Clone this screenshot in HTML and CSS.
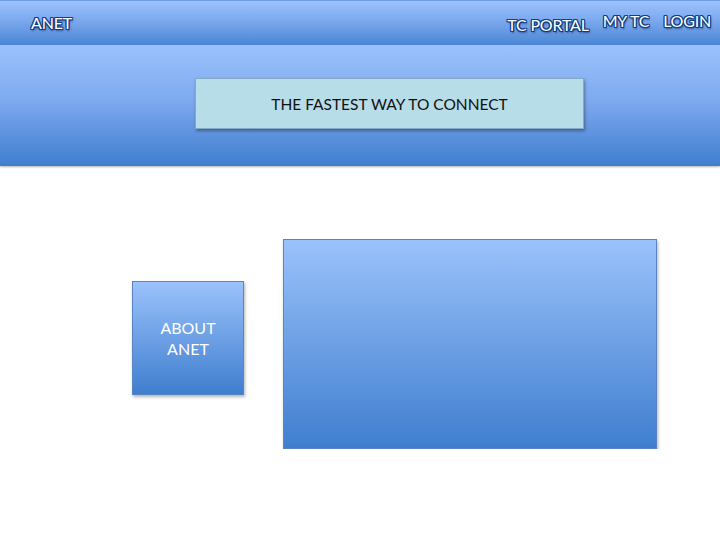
FILE: index.html
```html
<!DOCTYPE html>
<html>
<head>
<meta charset="utf-8">
<link rel="stylesheet" href="styles.css">
</head>
<body>
<header class="topbar">
  <span class="brand">ANET</span>
  <nav class="links">
    <span class="link">TC PORTAL</span>
    <span class="link">MY TC</span>
    <span class="link">LOGIN</span>
  </nav>
</header>
<section class="banner">
  <div class="tagline">THE FASTEST WAY TO CONNECT</div>
</section>
<main class="content">
  <div class="about">ABOUT<br>ANET</div>
  <div class="panel"></div>
</main>
</body>
</html>
```
FILE: styles.css
```css
html, body {
  margin: 0;
  padding: 0;
  background: #ffffff;
  font-family: Lato, "Open Sans", "Liberation Sans", sans-serif;
}
.topbar {
  height: 45px;
  box-sizing: border-box;
  border-top: 1px solid #6f9be0;
  background: linear-gradient(#9cc2fb, #7fabf0 40%, #4a86d4 100%);
  display: flex;
  align-items: center;
  justify-content: space-between;
  padding: 0 9px 0 31px;
}
.brand, .link {
  color: #ffffff;
  font-size: 16px;
  letter-spacing: -0.2px;
  text-shadow:
    1px 0 0 #133f82, -1px 0 0 #133f82, 0 1px 0 #133f82, 0 -1px 0 #133f82,
    1px 1px 0 #133f82, -1px -1px 0 #133f82, 1px -1px 0 #133f82, -1px 1px 0 #133f82,
    1px 2px 2px rgba(10,40,90,0.7);
  margin-top: -2px;
}
.links {
  display: flex;
  gap: 14px;
}
.link:first-child {
  margin-top: 2px;
}
.banner {
  height: 121px;
  background: linear-gradient(#9bc2fb, #7eaaf0 45%, #3f7ecf 100%);
  box-shadow: 0 1px 2px rgba(0,0,0,0.3);
  padding-top: 33px;
  box-sizing: border-box;
}
.tagline {
  margin-left: 195px;
  width: 389px;
  height: 51px;
  box-sizing: border-box;
  background: #b7dde8;
  border: 1px solid #84a9c4;
  box-shadow: 1px 2px 3px rgba(0,0,0,0.35);
  display: flex;
  align-items: center;
  justify-content: center;
  font-size: 15.5px;
  color: #111111;
}
.content {
  display: flex;
  align-items: flex-start;
  padding-top: 73px;
  padding-left: 132px;
  gap: 39px;
}
.about {
  margin-top: 42px;
  width: 112px;
  height: 114px;
  box-sizing: border-box;
  background: linear-gradient(#9bc2fb, #3f7ecf);
  border: 1px solid #5b85c2;
  box-shadow: 1px 2px 3px rgba(0,0,0,0.3);
  color: #ffffff;
  font-size: 16px;
  line-height: 21px;
  text-align: center;
  display: flex;
  align-items: center;
  justify-content: center;
}
.panel {
  width: 374px;
  height: 210px;
  box-sizing: border-box;
  background: linear-gradient(#9bc2fb, #3f7ecf);
  border: 1px solid #5b85c2;
  box-shadow: 1px 2px 3px rgba(0,0,0,0.3);
}
```
